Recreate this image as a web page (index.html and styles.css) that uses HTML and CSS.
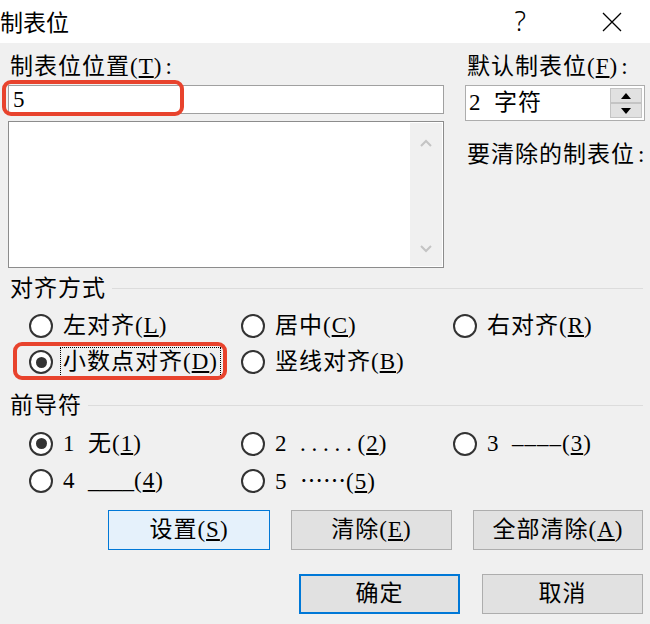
FILE: index.html
```html
<!doctype html>
<html>
    <head>
        <meta charset="utf-8">
        <title>制表位</title>
        <link rel="stylesheet" href="styles.css">
    </head>
    <body>
        <div class="dialog">
            <!-- title bar -->
            <div class="titlebar">
                <span class="title">制表位</span>
                <span class="help">?</span>
                <svg class="close" width="20" height="20" viewBox="0 0 20 20">
                    <path d="M1 1 L19 19 M19 1 L1 19" stroke="#000" stroke-width="1.3" fill="none"/>
                </svg>
            </div>

            <div class="content">
                <div class="top">
                    <div class="col">
                        <div class="label">制表位位置(<u>T</u>)<span class="colon">:</span></div>
                        <div class="field">5<div class="mark mark-input"></div></div>
                        <div class="listbox">
                            <div class="list-scroll">
                                <svg width="12" height="8" viewBox="0 0 12 8"><path d="M1 7 L6 2 L11 7" stroke="#c4c4c4" stroke-width="2" fill="none"/></svg>
                                <svg width="12" height="8" viewBox="0 0 12 8"><path d="M1 1 L6 6 L11 1" stroke="#c4c4c4" stroke-width="2" fill="none"/></svg>
                            </div>
                        </div>
                    </div>
                    <div class="col">
                        <div class="label">默认制表位(<u>F</u>)<span class="colon">:</span></div>
                        <div class="spinner">
                            <span class="spin-value">2&ensp;字符</span>
                            <div class="spin-btns">
                                <span class="spin-btn"><svg width="10" height="6" viewBox="0 0 10 6"><path d="M0 6 L5 0 L10 6 Z" fill="#000"/></svg></span>
                                <span class="spin-btn"><svg width="10" height="6" viewBox="0 0 10 6"><path d="M0 0 L5 6 L10 0 Z" fill="#000"/></svg></span>
                            </div>
                        </div>
                        <div class="label clear-label">要清除的制表位<span class="colon">:</span></div>
                    </div>
                </div>

                <!-- alignment -->
                <div class="group-head"><span>对齐方式</span><i class="rule"></i></div>
                <div class="options">
                    <div class="opt"><span class="radio"></span><span class="opt-text">左对齐(<u>L</u>)</span></div>
                    <div class="opt"><span class="radio"></span><span class="opt-text">居中(<u>C</u>)</span></div>
                    <div class="opt"><span class="radio"></span><span class="opt-text">右对齐(<u>R</u>)</span></div>
                    <div class="opt"><span class="radio on"></span><span class="opt-text focus">小数点对齐(<u>D</u>)</span><div class="mark mark-opt"></div></div>
                    <div class="opt"><span class="radio"></span><span class="opt-text">竖线对齐(<u>B</u>)</span></div>
                </div>

                <!-- leader -->
                <div class="group-head leader-head"><span>前导符</span><i class="rule"></i></div>
                <div class="options leaders">
                    <div class="opt"><span class="radio on"></span><span class="opt-text">1&ensp;无(<u>1</u>)</span></div>
                    <div class="opt"><span class="radio"></span><span class="opt-text">2&ensp;<span class="dots">.....</span>(<u>2</u>)</span></div>
                    <div class="opt"><span class="radio"></span><span class="opt-text">3&ensp;<span class="dashes">––––</span>(<u>3</u>)</span></div>
                    <div class="opt"><span class="radio"></span><span class="opt-text">4&ensp;<span class="unders">____</span>(<u>4</u>)</span></div>
                    <div class="opt"><span class="radio"></span><span class="opt-text">5&ensp;<span class="mid">……</span>(<u>5</u>)</span></div>
                </div>

                <div class="buttons">
                    <button class="btn btn-hover w162">设置(<u>S</u>)</button>
                    <button class="btn w161">清除(<u>E</u>)</button>
                    <button class="btn w170">全部清除(<u>A</u>)</button>
                </div>
                <div class="buttons buttons-bottom">
                    <button class="btn btn-default w161">确定</button>
                    <button class="btn w161">取消</button>
                </div>
            </div>
        </div>
    </body>
</html>
```

FILE: styles.css
```css
body {
    margin: 0;
    background: #f0f0f0;
    color: #000;
    font: 23px/1 "Liberation Serif", "Noto Sans CJK SC", serif;
    letter-spacing: 1px;
}
u {
    text-decoration-thickness: 2px;
    text-underline-offset: 2px;
}
.dialog {
    width: 650px;
    height: 624px;
    overflow: hidden;
}

/* title bar */
.titlebar {
    height: 43px;
    background: #fff;
    display: flex;
    align-items: center;
    letter-spacing: 0;
}
.title {
    flex: 1;
    font-family: "Noto Sans CJK SC", sans-serif;
    font-size: 23px;
    line-height: 43px;
}
.help {
    font-family: "Noto Sans", sans-serif;
    font-size: 27px;
    font-weight: 300;
    margin-right: 76px;
    margin-top: -2px;
}
.close { margin-right: 28px; }

.content { padding: 9px 7px 0 8px; }

/* top area */
.top {
    display: grid;
    grid-template-columns: 436px 180px;
    column-gap: 21px;
}
.label {
    line-height: 30px;
    padding-left: 2px;
    white-space: nowrap;
}
.colon { margin-left: 3px; }
.field {
    position: relative;
    margin-top: 3px;
    height: 29px;
    box-sizing: border-box;
    border: 1px solid #a0a0a0;
    background: #fff;
    padding-left: 4px;
    line-height: 27px;
}
.mark {
    position: absolute;
    box-sizing: border-box;
    border: 4px solid #e8432d;
    border-radius: 9px;
}
.mark-input {
    left: -7px;
    top: -6px;
    width: 182px;
    height: 36px;
}
.listbox {
    margin-top: 7px;
    height: 147px;
    box-sizing: border-box;
    border: 1px solid #8c8c8c;
    background: #fff;
    padding: 1px;
    display: flex;
    justify-content: flex-end;
}
.list-scroll {
    width: 32px;
    background: #f0f0f0;
    display: flex;
    flex-direction: column;
    justify-content: space-between;
    align-items: center;
    padding: 16px 0 13px;
}
.spinner {
    margin-top: 3px;
    height: 36px;
    box-sizing: border-box;
    border: 1px solid #adadad;
    background: #fff;
    display: flex;
}
.spin-value {
    padding-left: 3px;
    line-height: 34px;
}
.spin-btns {
    width: 32px;
    margin: 2px 2px 2px auto;
    display: flex;
    flex-direction: column;
}
.spin-btn {
    flex: 1;
    background: #e1e1e1;
    border: 1px solid #c4c4c4;
    display: flex;
    align-items: center;
    justify-content: center;
}
.clear-label { margin-top: 19px; }

/* groups */
.group-head {
    display: flex;
    align-items: center;
    height: 30px;
    margin-top: 5px;
    padding-left: 2px;
}
.leader-head { margin-top: 10px; }
.rule {
    flex: 1;
    height: 1px;
    background: #dcdcdc;
    margin-left: 6px;
}
.options {
    display: grid;
    grid-template-columns: repeat(3, 212px);
    padding-left: 21px;
    margin-top: 5px;
}
.opt {
    position: relative;
    display: flex;
    align-items: center;
    height: 36px;
    white-space: nowrap;
}
.leaders .opt { height: 37px; }
.radio {
    flex: none;
    width: 24px;
    height: 24px;
    box-sizing: border-box;
    border: 2px solid #333;
    border-radius: 50%;
    background: #fff;
    margin-right: 8px;
    display: flex;
    align-items: center;
    justify-content: center;
}
.radio.on::after {
    content: "";
    width: 11px;
    height: 11px;
    border-radius: 50%;
    background: #333;
}
.opt-text {
    line-height: 28px;
    padding: 0 2px;
}
.focus { outline: 1px dotted #000; }
.mark-opt {
    left: -16px;
    top: -2px;
    width: 214px;
    height: 38px;
}
.dots { letter-spacing: 0.25em; }
.dashes { letter-spacing: 1px; }
.unders { letter-spacing: 0; }
.mid { font-family: "Noto Sans CJK SC", sans-serif; letter-spacing: 0; }

/* buttons */
.buttons {
    display: flex;
    justify-content: flex-end;
    column-gap: 21px;
    margin-top: 11px;
}
.buttons-bottom {
    margin-top: 24px;
    column-gap: 22px;
}
.btn {
    height: 40px;
    box-sizing: border-box;
    border: 1px solid #adadad;
    background: #e1e1e1;
    color: #000;
    font: inherit;
    letter-spacing: inherit;
    line-height: 36px;
    padding: 0;
    text-align: center;
}
.btn-hover {
    background: #e5f1fb;
    border-color: #0078d7;
}
.btn-default { border: 2px solid #0078d7; }
.w161 { width: 161px; }
.w162 { width: 162px; }
.w170 { width: 170px; }
```
